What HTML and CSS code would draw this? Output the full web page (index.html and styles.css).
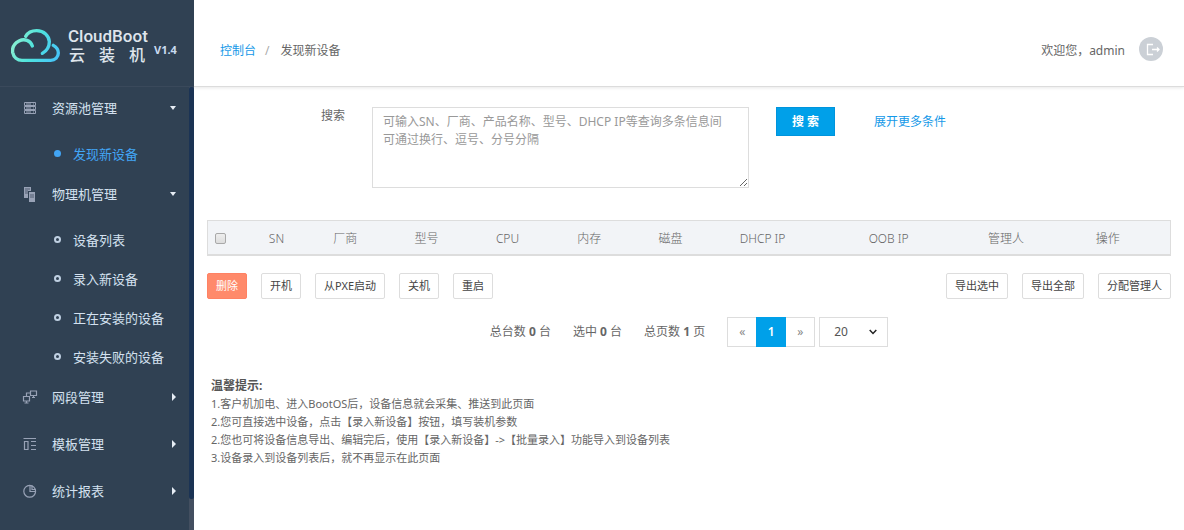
FILE: index.html
```html
<!DOCTYPE html>
<html lang="zh-CN">
<head>
<meta charset="utf-8">
<title>CloudBoot 云装机</title>
<link rel="stylesheet" href="styles.css">
</head>
<body>
<div class="app">
  <aside class="sidebar">
    <div class="brand">
      <svg class="brand-logo" viewBox="33 84 147 99" fill="none" stroke="url(#cloud)" stroke-width="10" stroke-linecap="round">
        <defs>
          <linearGradient id="cloud" gradientUnits="userSpaceOnUse" x1="40" y1="110" x2="175" y2="170">
            <stop offset="0" stop-color="#8df0d0"/>
            <stop offset=".45" stop-color="#4fe3dc"/>
            <stop offset="1" stop-color="#46c4fa"/>
          </linearGradient>
        </defs>
        <path d="M97 135C92 118 73 112 57 120C42 128 36 140 38 154C41 169 52 178 66 178H152C166 178 175 168 175 156C175 146 169 138 160 133"/>
        <path d="M77 106C84 94 96 89 110 89C132 89 147 104 148 122C148 138 139 150 127 157"/>
      </svg>
      <div class="brand-name">
        <span class="brand-en">CloudBoot</span>
        <span class="brand-cn"><span>云</span><span>装</span><span>机</span></span>
      </div>
      <span class="brand-version">V1.4</span>
    </div>
    <nav class="menu">
      <button class="menu-item" type="button">
        <svg class="menu-icon" viewBox="0 0 14 14" fill="none" stroke="currentColor"><path d="M1.5 1.5h11v3h-11zM1.5 5.5h11v3h-11zM1.5 9.5h11v3h-11zM3 3h5M10 3h1M3 7h5M10 7h1M3 11h5M10 11h1"/></svg>
        资源池管理<span class="caret caret-down"></span>
      </button>
      <div class="submenu">
        <a class="sub-item active" href="#">发现新设备</a>
      </div>
      <button class="menu-item" type="button">
        <svg class="menu-icon" viewBox="0 0 14 14"><path fill="currentColor" d="M1 0h7v4H5v7H1z"/><path fill="currentColor" d="M6 5h6v10H6z"/><path stroke="#304153" stroke-width=".7" d="M2 2h5M2 4h3M2 6h3M7 8h4M7 10h4"/></svg>
        物理机管理<span class="caret caret-down"></span>
      </button>
      <div class="submenu">
        <a class="sub-item" href="#">设备列表</a>
        <a class="sub-item" href="#">录入新设备</a>
        <a class="sub-item" href="#">正在安装的设备</a>
        <a class="sub-item" href="#">安装失败的设备</a>
      </div>
      <button class="menu-item spaced" type="button">
        <svg class="menu-icon" viewBox="0 0 14 14" fill="none" stroke="currentColor" stroke-width="1.2"><path d="M7.5 1h6v4.500h-6zM.5 6.500h6V11h-6zM10.500 5.500v2M9 7.500h3M3.500 11v2M1.500 13h4M3.500 6.500V3h4"/></svg>
        网段管理<span class="caret caret-right"></span>
      </button>
      <button class="menu-item spaced" type="button">
        <svg class="menu-icon" viewBox="0 0 14 14" fill="none" stroke="currentColor" stroke-width="1.2"><path d="M.5 1.500h12.500M1.500 4.500h3.500v8H1.500zM8 4.500h5M8 8.500h5M8 12.500h5"/></svg>
        模板管理<span class="caret caret-right"></span>
      </button>
      <button class="menu-item spaced" type="button">
        <svg class="menu-icon" viewBox="0 0 14 14" fill="none" stroke="currentColor" stroke-width="1.2"><circle cx="6.700" cy="7.300" r="5.900"/><path d="M7 1v6.500h5.800M9 1.500v4h3.500"/></svg>
        统计报表<span class="caret caret-right"></span>
      </button>
      <span class="scroll-track"><span class="scroll-thumb"></span></span>
    </nav>
  </aside>

  <div class="page">
    <header class="topbar">
      <nav class="crumbs">
        <a class="link" href="#">控制台</a><span class="crumb-sep">/</span><span>发现新设备</span>
      </nav>
      <div class="account">
        <span>欢迎您，admin</span>
        <button class="logout" type="button" aria-label="退出">
          <svg viewBox="0 0 24 24" fill="none" stroke="#fff" stroke-width="1.3"><path d="M14 7.500H8.500v10H14M13 12.500h7M18 10.500l2 2-2 2"/></svg>
        </button>
      </div>
    </header>

    <main class="content">
      <form class="search">
        <label class="search-label" for="keyword">搜索</label>
        <textarea class="search-box" id="keyword" placeholder="可输入SN、厂商、产品名称、型号、DHCP IP等查询多条信息间可通过换行、逗号、分号分隔"></textarea>
        <div class="search-actions">
          <button class="search-btn" type="button">搜 索</button>
          <a class="link" href="#">展开更多条件</a>
        </div>
      </form>

      <table class="devices">
        <colgroup>
          <col class="c-check"><col class="c-sn"><col class="c-mid"><col class="c-mid"><col class="c-mid"><col class="c-mid"><col class="c-mid"><col class="c-dhcp"><col class="c-oob"><col class="c-owner"><col>
        </colgroup>
        <thead>
          <tr>
            <th><input class="check" type="checkbox" aria-label="全选"></th>
            <th>SN</th><th>厂商</th><th>型号</th><th>CPU</th><th>内存</th><th>磁盘</th><th>DHCP IP</th><th>OOB IP</th><th>管理人</th><th>操作</th>
          </tr>
        </thead>
      </table>

      <div class="toolbar">
        <div class="btn-group">
          <button class="btn btn-danger" type="button">删除</button>
          <button class="btn" type="button">开机</button>
          <button class="btn" type="button">从PXE启动</button>
          <button class="btn" type="button">关机</button>
          <button class="btn" type="button">重启</button>
        </div>
        <div class="btn-group">
          <button class="btn" type="button">导出选中</button>
          <button class="btn" type="button">导出全部</button>
          <button class="btn" type="button">分配管理人</button>
        </div>
      </div>

      <div class="paging">
        <span>总台数 <b>0</b> 台</span>
        <span>选中 <b>0</b> 台</span>
        <span>总页数 <b>1</b> 页</span>
        <div class="pager-wrap">
          <div class="pager">
            <button class="page-btn" type="button">«</button>
            <button class="page-btn current" type="button">1</button>
            <button class="page-btn" type="button">»</button>
          </div>
          <div class="size">
            <select class="size-select" aria-label="每页数量"><option>20</option></select>
            <svg class="size-arrow" viewBox="0 0 8 6" fill="none" stroke="#222" stroke-width="1.5"><path d="M.7 1L4 4.500 7.300 1"/></svg>
          </div>
        </div>
      </div>

      <section class="tips">
        <h2 class="tips-title">温馨提示:</h2>
        <p>1.客户机加电、进入BootOS后，设备信息就会采集、推送到此页面</p>
        <p>2.您可直接选中设备，点击【录入新设备】按钮，填写装机参数</p>
        <p>2.您也可将设备信息导出、编辑完后，使用【录入新设备】-&gt;【批量录入】功能导入到设备列表</p>
        <p>3.设备录入到设备列表后，就不再显示在此页面</p>
      </section>
    </main>
  </div>
</div>
</body>
</html>
```
FILE: styles.css
```css
*, *::before { box-sizing: border-box; }

body {
  margin: 0;
  font: 12px/18px "Noto Sans", "Noto Sans CJK SC", sans-serif;
  color: #666;
  background: #fff;
}

button, select, textarea { font: inherit; color: inherit; margin: 0; }
a { text-decoration: none; }
.link { color: #1499e8; }

.app { display: flex; min-height: 100vh; }

/* Sidebar */
.sidebar {
  position: relative;
  z-index: 1;
  flex: 0 0 194px;
  display: flex;
  flex-direction: column;
  background: #304153;
}
.brand {
  display: flex;
  align-items: center;
  height: 87px;
  padding: 4px 0 0 11px;
  border-bottom: 1px solid #3a495b;
  color: #dfe5ec;
}
.brand-logo { width: 49px; height: 33px; }
.brand-name { width: 78px; margin-left: 8px; }
.brand-en { display: block; font: 500 17px/20px Roboto, sans-serif; }
.brand-cn {
  display: flex;
  justify-content: space-between;
  padding: 0 1px;
  font: 500 16px/19px Roboto, "Noto Sans CJK SC", sans-serif;
}
.brand-version { margin: 9px 0 0 8px; font-size: 11px; font-weight: 700; color: #c8daf0; }

.menu { position: relative; flex: 1; }
.menu-item {
  display: flex;
  align-items: center;
  width: 100%;
  height: 42px;
  padding: 0 18px 0 23px;
  border: 0;
  background: none;
  font-size: 13px;
  color: #d4e1f0;
}
.menu-item.spaced { margin-bottom: 5px; }
.menu-icon { width: 14px; height: 14px; margin-right: 15px; color: #98a2b6; overflow: visible; }
.caret { margin-left: auto; border: 4px solid transparent; }
.caret-down { border-width: 4px 3px 0; border-top-color: #e6edf5; }
.caret-right { border-left-color: #e6edf5; border-right: 0; }
.submenu { padding-top: 5px; }
.sub-item {
  display: flex;
  align-items: center;
  gap: 12px;
  height: 39px;
  padding-left: 54px;
  font-size: 13px;
  color: #d4e1f0;
}
.sub-item::before {
  content: "";
  width: 7px;
  height: 7px;
  border: 2px solid #bfd0e2;
  border-radius: 50%;
}
.sub-item.active { color: #42a5f5; }
.sub-item.active::before { border-color: #42a5f5; background: #42a5f5; }
.scroll-track { position: absolute; top: 0; right: 0; bottom: 0; width: 5px; background: #434f60; }
.scroll-thumb { display: block; height: 93%; border-radius: 2px; background: #1b3354; }

/* Header */
.page { flex: 1; min-width: 0; }
.topbar {
  display: flex;
  justify-content: space-between;
  align-items: center;
  height: 87px;
  padding: 12px 21px 0 26px;
  border-bottom: 1px solid #dcdcdc;
  box-shadow: 0 1px 3px #e8e8e8;
}
.crumbs, .account { display: flex; align-items: center; }
.crumbs, .account span { padding-top: 3px; }
.account { gap: 14px; }
.crumb-sep { margin: 0 11px 0 9px; color: #aaa; }
.logout { width: 24px; height: 24px; padding: 0; border: 0; border-radius: 50%; background: #cbd0d6; }
.logout svg { display: block; }

/* Search */
.content { padding: 20px 13px; }
.search {
  display: grid;
  grid-template-columns: 138fr 377fr 395fr;
  gap: 27px;
  align-items: start;
}
.search-label { text-align: right; }
.search-box {
  height: 81px;
  padding: 5px 16px 5px 10px;
  border: 1px solid #ddd;
  outline: 0;
  background: #fff;
}
.search-box::placeholder { color: #999; opacity: 1; }
.search-actions { display: flex; align-items: center; gap: 39px; }
.search-btn {
  width: 59px;
  height: 29px;
  padding: 0;
  border: 1px solid #0094dc;
  background: #00a0e9;
  color: #fff;
  font-weight: 600;
}

/* Table */
.devices {
  width: 100%;
  margin-top: 32px;
  table-layout: fixed;
  border-collapse: separate;
  border-spacing: 0;
  border: 1px solid #ddd;
  border-bottom-width: 2px;
  background: #f2f4f7;
}
.devices th { height: 33px; padding: 2px 7px 0; text-align: left; font-weight: 300; }
.c-check { width: 5.6%; }
.c-sn { width: 6.7%; }
.c-mid { width: 8.45%; }
.c-dhcp { width: 13.4%; }
.c-oob { width: 12.4%; }
.c-owner { width: 11.2%; }
.check {
  display: block;
  appearance: none;
  width: 11px;
  height: 11px;
  margin: 0;
  border: 1px solid #a9a9a9;
  border-radius: 2px;
  background: linear-gradient(#eee, #ddd);
}

/* Actions */
.toolbar { display: flex; justify-content: space-between; margin-top: 17px; }
.btn-group { display: flex; gap: 14px; }
.btn {
  height: 26px;
  padding: 0 8px;
  border: 1px solid #ddd;
  border-radius: 2px;
  background: #fff;
  font-size: 11px;
  color: #444;
}
.btn-danger { border-color: #ff8264; background: #ff8a6b; color: #fff; }

/* Paging */
.paging { display: flex; justify-content: center; align-items: center; gap: 22px; margin-top: 18px; }
.pager-wrap { display: flex; gap: 4px; }
.pager { display: flex; border: 1px solid #ddd; }
.page-btn { width: 28px; height: 28px; padding: 0; border: 0; background: #fff; color: #888; }
.page-btn.current { width: 30px; height: 30px; margin: -1px 0; background: #00a0e9; color: #fff; font-weight: 600; }
.size { position: relative; }
.size-select {
  appearance: none;
  width: 69px;
  height: 30px;
  padding: 0 14px;
  border: 1px solid #ddd;
  border-radius: 0;
  background: #fff;
  color: #555;
}
.size-arrow { position: absolute; top: 12px; right: 11px; width: 8px; height: 6px; pointer-events: none; }

/* Tips */
.tips { margin: 30px 4px 0; font-size: 11px; }
.tips p { margin: 0; }
.tips-title { margin: 0; font-size: 12px; line-height: 18px; color: #555; }
```
